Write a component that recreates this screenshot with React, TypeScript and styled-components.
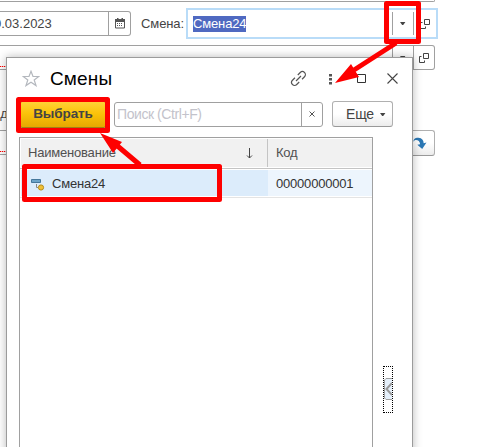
import React from "react";
import styled, { createGlobalStyle } from "styled-components";

const Global = createGlobalStyle`
  * { box-sizing: border-box; }
  body { margin: 0; background: #fff; overflow: hidden; }
  svg { flex: none; }
`;

const Page = styled.div`
  position: relative;
  width: 493px;
  height: 447px;
  overflow: hidden;
  background: #fff;
  font: 13px/16px "Liberation Sans", Arial, sans-serif;
  color: #444;
`;

const Form = styled.div`
  width: 435px;
  display: flex;
  flex-direction: column;
`;

const PreviousField = styled.div`
  height: 2px;
  border: solid #a0a0a0;
  border-width: 0 1px 1px 0;
  border-radius: 0 0 3px 0;
`;

const FormRow = styled.div`
  display: flex;
  align-items: center;
  height: 31px;
  margin-top: 6px;
`;

const DateField = styled.div`
  display: flex;
  flex: none;
  width: 131px;
  height: 25px;
  border: 1px solid #a0a0a0;
  border-left: 0;
  border-radius: 0 3px 3px 0;
`;

const DateText = styled.span`
  flex: 1;
  line-height: 23px;
  white-space: nowrap;
  margin-left: -6px;
`;

const FieldButton = styled.span`
  width: 21px;
  display: flex;
  align-items: center;
  justify-content: center;
  border-left: 1px solid #a0a0a0;
`;

const DateButton = styled(FieldButton)`
  width: 22px;
`;

const Label = styled.label`
  flex: none;
  width: 55px;
  padding-left: 10px;
  letter-spacing: -0.1px;
`;

const FocusField = styled.div`
  display: flex;
  flex: none;
  align-items: center;
  width: 252px;
  height: 31px;
  border: 2px solid #b9dcf8;
  padding-left: 5px;
`;

const Selected = styled.span`
  background: #4f69c1;
  color: #fff;
  height: 16px;
  letter-spacing: -0.15px;
`;

const DropSlot = styled.span`
  margin-left: auto;
  width: 22px;
  height: 23px;
  border: solid #a0a0a0;
  border-width: 0 1px;
  display: flex;
  align-items: center;
  justify-content: center;
`;

const OpenSlot = styled.span`
  width: 22px;
  display: flex;
  justify-content: center;
`;

const LowerField = styled.div`
  display: flex;
  height: 25px;
  margin-top: 6px;
  border: 1px solid #a0a0a0;
  border-left: 0;
  border-radius: 0 3px 3px 0;
`;

const Underline = styled.div`
  width: 6px;
  height: 1px;
  margin: 20px auto 0 0;
  background: repeating-linear-gradient(90deg, #f00 0 1px, #fbb 1px 2px);
`;

const Caption = styled.div`
  height: 16px;
  margin-top: 36px;
  margin-left: -7px;
`;

const ActionRow = styled.div`
  display: flex;
  justify-content: space-between;
  margin-top: 8px;
  height: 26px;
`;

const StubField = styled.div`
  width: 20px;
  height: 25px;
  border: solid #a0a0a0;
  border-width: 1px 0;
`;

const ActionButton = styled.div`
  width: 30px;
  border: 1px solid #b0b0b0;
  border-bottom-color: #999;
  border-radius: 3px;
  background: linear-gradient(#fff 50%, #ececec);
  display: flex;
  align-items: center;
  justify-content: center;
`;

const Dialog = styled.section`
  position: absolute;
  left: 6px;
  top: 57px;
  width: 407px;
  height: 410px;
  border: 1px solid #9b9b9b;
  background: #fff;
  box-shadow: 0 0 9px rgba(0, 0, 0, 0.28);
  display: flex;
  flex-direction: column;
`;

const TitleBar = styled.header`
  display: flex;
  align-items: center;
  height: 41px;
  padding-left: 15px;
`;

const Title = styled.h1`
  margin: 0 auto 0 10px;
  font-size: 19px;
  font-weight: 400;
  line-height: 24px;
  letter-spacing: 0.15px;
  color: #000;
`;

const TitleIcons = styled.div`
  display: flex;
  align-items: center;
  width: 122px;
`;

const TitleIcon = styled.span<{ $w: number }>`
  flex: none;
  width: ${(p) => p.$w}px;
  height: 18px;
  display: flex;
`;

const Toolbar = styled.div`
  display: flex;
  align-items: center;
  height: 31px;
  padding-left: 13px;
`;

const ChooseButton = styled.button`
  width: 86px;
  height: 27px;
  padding: 0 0 1px;
  border: 1px solid #a08018;
  border-radius: 2px;
  background: linear-gradient(#ffd236, #fbc30a 45%, #e6a900);
  font: bold 13.5px/18px "Liberation Sans", Arial, sans-serif;
  letter-spacing: -0.1px;
  color: #444;
`;

const Search = styled.div`
  display: flex;
  width: 209px;
  height: 25px;
  margin-left: 8px;
  border: 1px solid #a0a0a0;
  border-radius: 3px;
`;

const Placeholder = styled.span`
  flex: 1;
  padding-left: 2px;
  font-size: 14px;
  line-height: 23px;
  letter-spacing: -0.43px;
  color: #c3c3cb;
`;

const MoreButton = styled.button`
  display: flex;
  align-items: center;
  width: 61px;
  height: 26px;
  margin: -1px 0 0 9px;
  padding: 0 0 0 13px;
  gap: 6px;
  border: 1px solid #b0b0b0;
  border-bottom-color: #999;
  border-radius: 3px;
  background: linear-gradient(#fff 50%, #ececec);
  font: 14px/18px "Liberation Sans", Arial, sans-serif;
  letter-spacing: -0.2px;
  color: #444;
`;

const Body = styled.div`
  display: flex;
  flex: 1;
  margin: 7px 0 0 12px;
`;

const Table = styled.div`
  width: 354px;
  border: solid #a0a0a0;
  border-width: 1px 1px 0;
  letter-spacing: -0.2px;
`;

const TableRow = styled.div<{ $head?: boolean }>`
  display: grid;
  grid-template-columns: 247px 1fr;
  height: ${(p) => (p.$head ? 31 : 29)}px;
  padding: 1px 0 1px 1px;
  border-bottom: 1px solid ${(p) => (p.$head ? "#c4c4c4" : "#e4e4e4")};
`;

const Cell = styled.div<{ $bg: string; $divide?: boolean; $ink?: string }>`
  display: flex;
  align-items: center;
  padding: ${(p) => (p.$ink ? 2 : 0)}px 0 0 7px;
  background: ${(p) => p.$bg};
  color: ${(p) => p.$ink ?? "#505050"};
  border-right: ${(p) => (p.$divide ? "1px solid #c4c4c4" : "0")};

  &:last-child {
    padding-left: 8px;
  }
`;

const SortArrow = styled.svg`
  margin-left: auto;
  margin-right: 14px;
`;

const ItemIcon = styled.svg`
  margin: 1px 7px 0 3px;
`;

const Splitter = styled.div`
  width: 10px;
  height: 47px;
  margin: 229px 0 0 10px;
  padding-top: 11px;
  border: 1px dotted #000;
  display: flex;
  align-items: flex-start;
  overflow: hidden;
`;

const Annotations = styled.svg`
  position: absolute;
  left: 0;
  top: 0;
`;

const Caret = () => (
  <svg width="6" height="3" viewBox="0 0 6 3"><path d="M0 0h5.400L3.200 3h-1z" fill="#444" /></svg>
);

const OpenIcon = () => (
  <svg width="10" height="10" viewBox="0 0 10 10" fill="none" stroke="#444">
    <path d="M4.500.5h5v5h-5zM2.500 3.500h-2v6h5v-2" />
  </svg>
);

const CalendarIcon = () => (
  <svg width="10" height="11" viewBox="0 0 10 11">
    <path d="M.5 2.500h9v7.500h-9z" fill="#fff" stroke="#555" />
    <path d="M0 1h10v3H0zM2 0h1.500v2H2zM6.500 0H8v2H6.500z" fill="#555" />
    <path d="M2 5.500h6M2 7.500h6" stroke="#555" strokeDasharray="1 1" />
  </svg>
);

export default function App() {
  return (
    <Page>
      <Global />
      <Form>
        <PreviousField />
        <FormRow>
          <DateField>
            <DateText>0.03.2023</DateText>
            <DateButton><CalendarIcon /></DateButton>
          </DateField>
          <Label>Смена:</Label>
          <FocusField>
            <Selected>Смена24</Selected>
            <DropSlot><Caret /></DropSlot>
            <OpenSlot><OpenIcon /></OpenSlot>
          </FocusField>
        </FormRow>
        <LowerField>
          <Underline />
          <FieldButton><Caret /></FieldButton>
          <FieldButton><OpenIcon /></FieldButton>
        </LowerField>
        <Caption>ид</Caption>
        <ActionRow>
          <StubField><Underline /></StubField>
          <ActionButton>
            <svg width="14" height="13" viewBox="0 0 14 13">
              <path d="M.5 4.800C.3 1.500 3 .5 5.500.8 9 1.200 10.500 3 10.700 6.200L13.500 5.500 9.200 12 4.300 7.800l2.800-.6C7 4 4.500 2.500 2.300 3c-.9.200-1.300.9-1.800 1.800z" fill="#2b78b5" />
            </svg>
          </ActionButton>
        </ActionRow>
      </Form>
      <Dialog>
        <TitleBar>
          <svg width="18" height="17" viewBox="0 0 18 17" fill="none" stroke="#b4b8be" strokeWidth="1.200">
            <path d="M9 1.300l2 5.200h5.800l-4.600 3.400 1.800 5.700L9 12.200l-5 3.400 1.800-5.700L1.200 6.500H7z" />
          </svg>
          <Title>Смены</Title>
          <TitleIcons>
            <TitleIcon $w={38}>
              <svg width="18" height="18" viewBox="0 0 18 18" fill="none" stroke="#555" strokeWidth="1.200">
                <g transform="translate(8.500 8.500) rotate(-45)">
                  <path d="M-2-3h-3.500a3 3 0 0 0 0 6H-2M2-3h3.500a3 3 0 0 1 0 6H2M-3.500 0h7" />
                </g>
              </svg>
            </TitleIcon>
            <TitleIcon $w={29}>
              <svg width="5" height="18" viewBox="0 0 5 18" fill="#555">
                <path d="M1 4h3v2.500H1zM1 8h3v2.500H1zM1 12h3v2.500H1z" />
              </svg>
            </TitleIcon>
            <TitleIcon $w={30}>
              <svg width="10" height="18" viewBox="0 0 10 18" fill="none" stroke="#333">
                <path d="M.5 4.500h8v8h-8z" />
              </svg>
            </TitleIcon>
            <TitleIcon $w={12}>
              <svg width="11" height="18" viewBox="0 0 11 18" stroke="#444" strokeWidth="1.100">
                <path d="M.5 3.500l10 10m0-10l-10 10" />
              </svg>
            </TitleIcon>
          </TitleIcons>
        </TitleBar>
        <Toolbar>
          <ChooseButton>Выбрать</ChooseButton>
          <Search>
            <Placeholder>Поиск (Ctrl+F)</Placeholder>
            <FieldButton>
              <svg width="6" height="8" viewBox="0 0 6 8" stroke="#555"><path d="M.5.5l5 5m0-5l-5 5" /></svg>
            </FieldButton>
          </Search>
          <MoreButton>Еще <Caret /></MoreButton>
        </Toolbar>
        <Body>
          <Table>
            <TableRow $head>
              <Cell $bg="#f1f1f1" $divide>
                Наименование
                <SortArrow width="7" height="11" viewBox="0 0 7 11" fill="none" stroke="#444">
                  <path d="M3.500 0v10M1 7.500l2.500 2.500L6 7.500" />
                </SortArrow>
              </Cell>
              <Cell $bg="#f1f1f1">Код</Cell>
            </TableRow>
            <TableRow>
              <Cell $bg="#dcecfb" $ink="#333">
                <ItemIcon width="14" height="13" viewBox="0 0 14 13">
                  <path d="M.5 1.500h9v3h-9z" fill="#6ba3c8" stroke="#44779b" />
                  <path d="M5.500 6v3.500h1.500" fill="none" stroke="#888" />
                  <circle cx="10" cy="9.500" r="2.600" fill="#f0c036" stroke="#b58b1a" />
                </ItemIcon>
                Смена24
              </Cell>
              <Cell $bg="#edf5fd" $ink="#333">00000000001</Cell>
            </TableRow>
          </Table>
          <Splitter>
            <svg width="9" height="22" viewBox="0 0 9 22">
              <path d="M9 .5H2L.5 2v18L2 21.500h7" fill="#e4effa" stroke="#a0a0a0" />
              <path d="M8 5l-5.500 6L8 17" fill="none" stroke="#999" strokeWidth="2" />
            </svg>
          </Splitter>
        </Body>
      </Dialog>
      <Annotations width="493" height="447" viewBox="0 0 493 447" fill="none" stroke="#fe0000">
        <g strokeWidth="5" strokeLinejoin="round">
          <path d="M386.500 3.500h32v38h-32zM18.500 99.500h89v31h-89zM24.500 166.500h195v33h-195z" />
          <path d="M396 43l-42 27M140 165l-26-22" />
        </g>
        <path d="M335 83l16-19 8 13zM100 133l22 9-9 11z" fill="#fe0000" stroke="none" />
      </Annotations>
    </Page>
  );
}
